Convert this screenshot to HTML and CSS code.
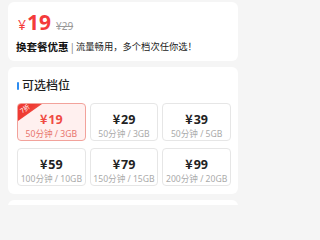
FILE: index.html
```html
<!DOCTYPE html>
<html lang="zh">
<head>
<meta charset="utf-8">
<link rel="stylesheet" href="styles.css">
</head>
<body>
<div class="page">
  <section class="card promo">
    <div class="price-row">
      <span class="cur">¥</span><span class="num">19</span><span class="old">¥29</span>
    </div>
    <div class="slogan"><b>换套餐优惠</b><span class="sep">|</span><span class="desc">流量畅用，多个档次任你选！</span></div>
  </section>
  <section class="card plans">
    <h2 class="title"><span class="bar"></span>可选档位</h2>
    <div class="grid">
      <div class="opt active"><span class="tag"><span class="tag-text">7折</span></span><div class="p"><span class="y">¥</span>19</div><div class="s">50分钟 / 3GB</div></div>
      <div class="opt"><div class="p"><span class="y">¥</span>29</div><div class="s">50分钟 / 3GB</div></div>
      <div class="opt"><div class="p"><span class="y">¥</span>39</div><div class="s">50分钟 / 5GB</div></div>
      <div class="opt"><div class="p"><span class="y">¥</span>59</div><div class="s">100分钟 / 10GB</div></div>
      <div class="opt"><div class="p"><span class="y">¥</span>79</div><div class="s">150分钟 / 15GB</div></div>
      <div class="opt"><div class="p"><span class="y">¥</span>99</div><div class="s">200分钟 / 20GB</div></div>
    </div>
  </section>
  <section class="card next"></section>
</div>
</body>
</html>
```

FILE: styles.css
```css
* { box-sizing: border-box; }
html { background: #f5f5f5; }
html, body { margin: 0; padding: 0; }
body {
  background: #f5f5f5;
  font-family: "Noto Sans", "Noto Sans CJK SC", sans-serif;
  color: #222;
  width: 246px;
  height: 205px;
  overflow: hidden;
}
.page {
  width: 246px;
  padding: 2px 8px 0;
  display: flex;
  flex-direction: column;
  gap: 6px;
}
.card {
  background: #fff;
  border-radius: 6px;
}
.promo {
  height: 59px;
  padding: 6px 8px 0;
}
.price-row {
  display: flex;
  align-items: baseline;
  height: 26px;
  color: #f43b3b;
}
.cur { font-size: 14px; margin-left: 2px; margin-right: 1px; }
.num { font-size: 21px; font-weight: 700; }
.old {
  font-size: 10px;
  color: #999;
  text-decoration: line-through;
  margin-left: 5px;
}
.slogan {
  margin-top: 6px;
  display: flex;
  align-items: center;
  line-height: 14px;
  white-space: nowrap;
}
.slogan b { font-size: 10.5px; font-weight: 700; color: #111; }
.sep { font-size: 10px; color: #888; margin: 0 1px; }
.desc { font-size: 9.3px; color: #222; }
.plans {
  height: 127px;
  padding: 10px 7px 0 9px;
}
.title {
  margin: 0;
  display: flex;
  align-items: center;
  gap: 3px;
  font-size: 12px;
  font-weight: 500;
  line-height: 18px;
  color: #222;
}
.bar {
  width: 2px;
  height: 8px;
  background: #2d8cf0;
  border-radius: 1px;
}
.grid {
  margin-top: 8px;
  display: grid;
  grid-template-columns: repeat(3, 1fr);
  column-gap: 4px;
  row-gap: 7px;
}
.opt {
  position: relative;
  height: 38px;
  border: 1px solid #e6e6e6;
  border-radius: 4px;
  text-align: center;
  overflow: hidden;
  padding-top: 7px;
}
.p {
  font-size: 12.5px;
  font-weight: 700;
  line-height: 15px;
  color: #222;
}
.y { font-family: "Noto Sans CJK SC", sans-serif; margin-right: 1px; }
.s {
  font-size: 8.6px;
  line-height: 12px;
  color: #aaa;
  margin-top: 1px;
}
.opt.active {
  background: #fff0ef;
  border-color: #f2a29b;
}
.opt.active .p { color: #f04a43; }
.opt.active .s { color: #e8756d; }
.tag {
  position: absolute;
  left: 0;
  top: 0;
  width: 24px;
  height: 17px;
  background: linear-gradient(135deg, #ef3b33 40%, #f6726a);
  clip-path: polygon(0 0, 100% 0, 0 100%);
}
.tag-text {
  position: absolute;
  left: 2px;
  top: 1px;
  font-size: 6.5px;
  line-height: 8px;
  color: #fff;
  transform: rotate(-36deg);
}
.next { height: 20px; }
```
